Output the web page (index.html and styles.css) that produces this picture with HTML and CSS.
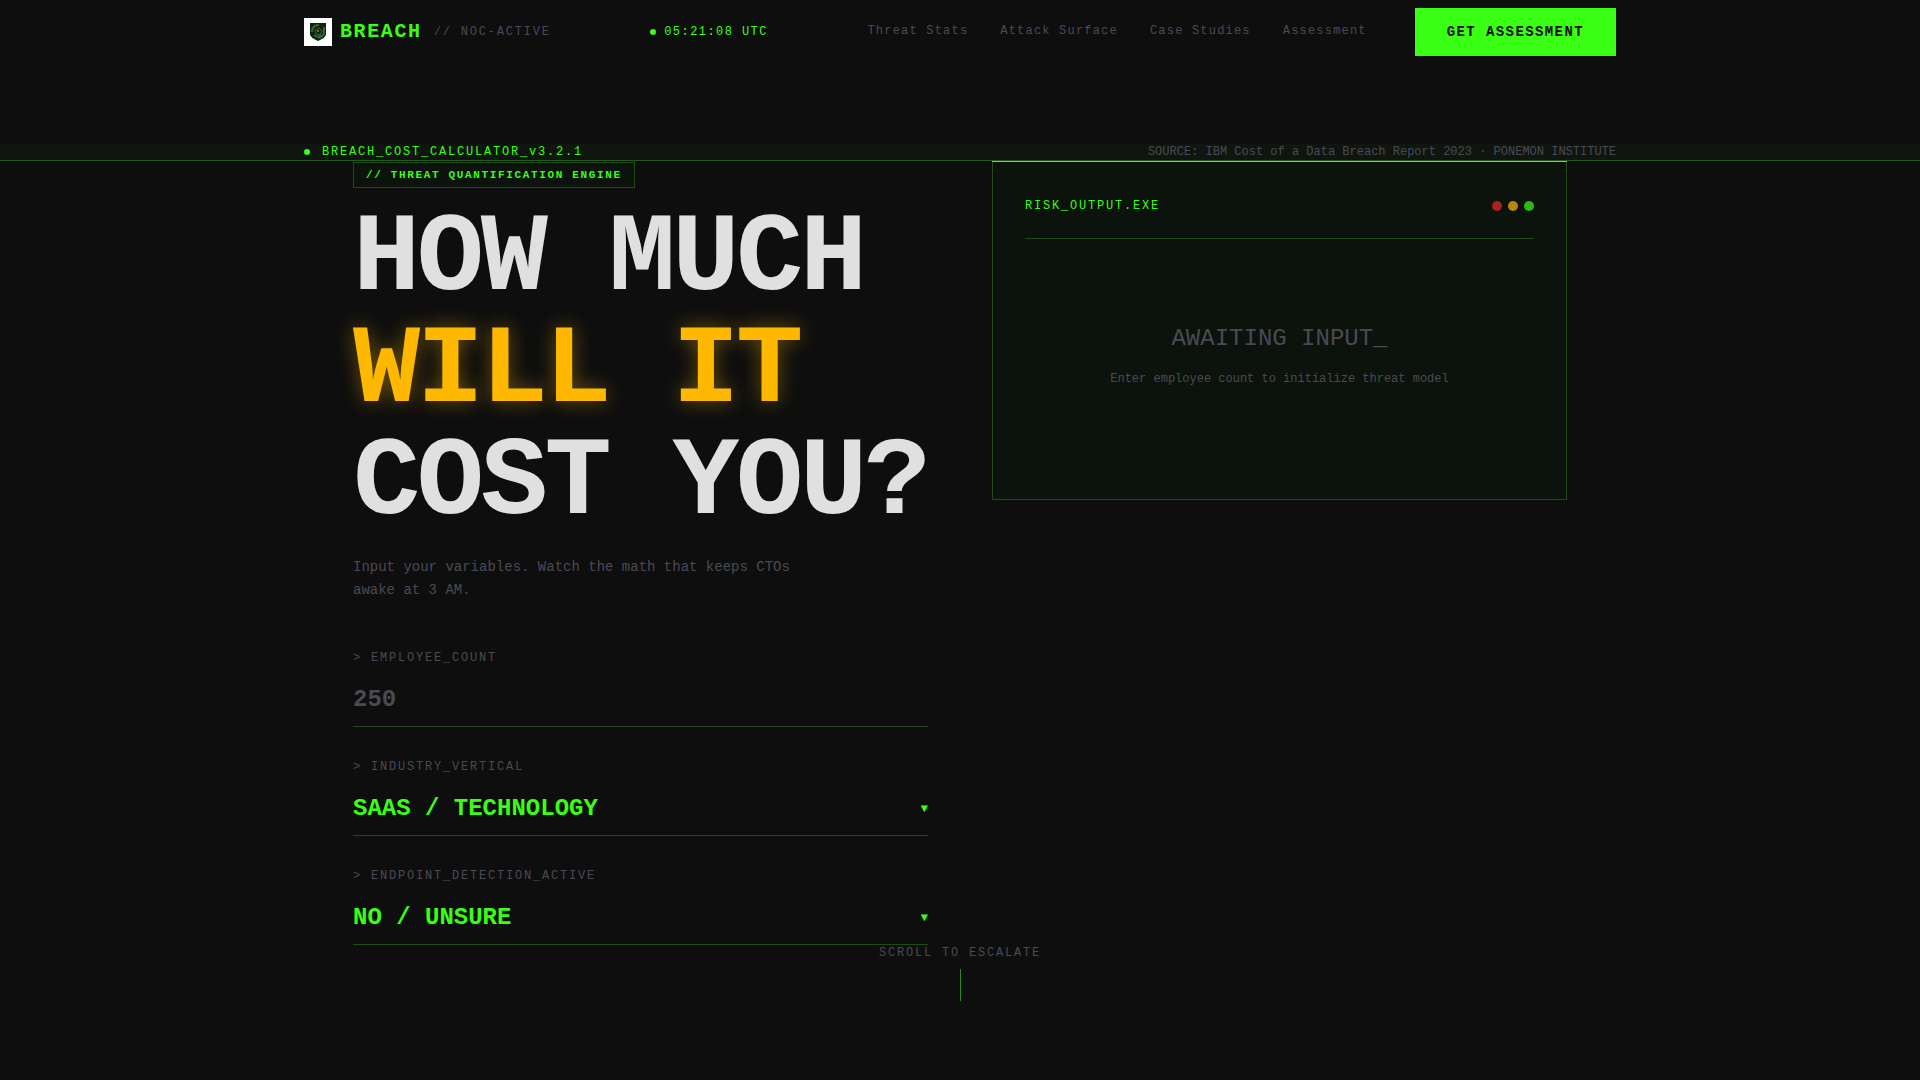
FILE: index.html
```html
<!DOCTYPE html>
<html lang="en">
<head>
    <meta charset="UTF-8">
    <meta name="viewport" content="width=device-width, initial-scale=1.0">
    <title>BREACH - Cost Calculator</title>
    <link rel="stylesheet" href="styles.css">
</head>
<body>
    <header class="navbar">
        <div class="container navbar-inner">
            <a class="brand" href="#">
                <svg class="brand-logo" viewBox="0 0 28 28" aria-hidden="true">
                    <rect width="28" height="28" fill="#fff"/>
                    <path d="M6 5h16v11c0 3-4 5-8 7-4-2-8-4-8-7z" fill="#10210f"/>
                    <path d="M8 14c0-5 3-7 7-7M20 9v6c0 3-3 4-6 5M10 17c2 2 5 2 7 0" fill="none" stroke="#2d6b35" stroke-width="2"/>
                    <path d="M11 12l4-2 3 3-2 4-4-1z" fill="none" stroke="#3d6a2c"/>
                    <circle cx="14" cy="13" r="1" fill="#d0742a"/>
                </svg>
                <span class="brand-name">BREACH</span>
                <span class="brand-status">// NOC-ACTIVE</span>
            </a>
            <div class="clock"><span class="dot"></span><span>05:21:08 UTC</span></div>
            <nav class="nav-right">
                <ul class="nav-links">
                    <li><a href="#stats">Threat Stats</a></li>
                    <li><a href="#surface">Attack Surface</a></li>
                    <li><a href="#cases">Case Studies</a></li>
                    <li><a href="#assessment">Assessment</a></li>
                </ul>
                <button class="btn" type="button">GET ASSESSMENT</button>
            </nav>
        </div>
    </header>

    <div class="statusbar">
        <div class="container statusbar-inner">
            <div class="status-name"><span class="dot"></span><span>BREACH_COST_CALCULATOR_v3.2.1</span></div>
            <div class="status-source">SOURCE: IBM Cost of a Data Breach Report 2023 · PONEMON INSTITUTE</div>
        </div>
    </div>

    <main class="container calculator">
        <section>
            <div class="tag">// THREAT QUANTIFICATION ENGINE</div>
            <h1>HOW MUCH<br><span class="amber">WILL IT</span><br>COST YOU?</h1>
            <p class="intro">Input your variables. Watch the math that keeps CTOs awake at 3 AM.</p>

            <form class="fields">
                <div class="field">
                    <label for="employees">&gt; EMPLOYEE_COUNT</label>
                    <input id="employees" type="text" inputmode="numeric" placeholder="250">
                </div>
                <div class="field">
                    <label for="industry">&gt; INDUSTRY_VERTICAL</label>
                    <div class="select-wrap">
                        <select id="industry">
                            <option>SAAS / TECHNOLOGY</option>
                        </select>
                        <span class="arrow">▼</span>
                    </div>
                </div>
                <div class="field">
                    <label for="edr">&gt; ENDPOINT_DETECTION_ACTIVE</label>
                    <div class="select-wrap">
                        <select id="edr">
                            <option>NO / UNSURE</option>
                        </select>
                        <span class="arrow">▼</span>
                    </div>
                </div>
            </form>
        </section>

        <section class="panel">
            <div class="panel-header">
                <span>RISK_OUTPUT.EXE</span>
                <div class="lights">
                    <span class="light red"></span>
                    <span class="light yellow"></span>
                    <span class="light green"></span>
                </div>
            </div>
            <div class="panel-empty">
                <div class="awaiting">AWAITING INPUT_</div>
                <div class="hint">Enter employee count to initialize threat model</div>
            </div>
        </section>
    </main>

    <div class="scroll-cue">
        <span>SCROLL TO ESCALATE</span>
        <div class="scroll-line"></div>
    </div>
</body>
</html>
```
FILE: styles.css
```css
:root {
    --bg: #0e0e0e;
    --green: #39ff14;
    --green-dim: #1d4d14;
    --amber: #ffb800;
    --muted: #4a4a55;
    --light: #e0e0e0;
}
* {
    box-sizing: border-box;
    margin: 0;
    padding: 0;
}
body {
    position: relative;
    min-height: 100vh;
    background: var(--bg);
    color: var(--light);
    font-family: "Liberation Mono", "Courier New", monospace;
    font-size: 12px;
    line-height: 16px;
}
a {
    color: inherit;
    text-decoration: none;
}
.container {
    width: 100%;
    max-width: 1376px;
    margin: 0 auto;
    padding: 0 32px;
}
.dot {
    width: 6px;
    height: 6px;
    border-radius: 50%;
    background: var(--green);
}

/* Top navigation */
.navbar-inner {
    display: flex;
    align-items: center;
    justify-content: space-between;
    height: 64px;
}
.brand {
    display: flex;
    align-items: center;
}
.brand-logo {
    width: 28px;
    height: 28px;
    margin-right: 8px;
}
.brand-name {
    margin-right: 12px;
    color: var(--green);
    font-size: 20px;
    font-weight: bold;
    letter-spacing: 0.08em;
}
.brand-status {
    color: var(--muted);
    letter-spacing: 0.15em;
}
.clock {
    display: flex;
    align-items: center;
    gap: 8px;
    color: var(--green);
    letter-spacing: 0.12em;
}
.nav-right {
    display: flex;
    align-items: center;
    gap: 48px;
}
.nav-links {
    display: flex;
    gap: 32px;
    padding-bottom: 2px;
    list-style: none;
    color: var(--muted);
    letter-spacing: 0.1em;
}
.btn {
    height: 48px;
    padding: 0 32px;
    border: none;
    background: var(--green);
    color: #0a0a0a;
    font-family: inherit;
    font-size: 14px;
    font-weight: bold;
    letter-spacing: 0.1em;
    cursor: pointer;
}

/* Status strip */
.statusbar {
    margin-top: 80px;
    border-bottom: 1px solid #245a1b;
    background: #10160f;
}
.statusbar-inner {
    display: flex;
    justify-content: space-between;
}
.status-name {
    display: flex;
    align-items: center;
    gap: 12px;
    color: var(--green);
    letter-spacing: 0.15em;
}
.status-source {
    color: var(--muted);
}

/* Calculator */
.calculator {
    display: grid;
    grid-template-columns: 1fr 1fr;
    gap: 64px;
    align-items: start;
    max-width: 1278px;
}
.tag {
    width: fit-content;
    margin: 1px 0 16px;
    padding: 4px 12px;
    border: 1px solid var(--green-dim);
    background: #0c130c;
    color: var(--green);
    font-size: 11px;
    font-weight: bold;
    letter-spacing: 0.15em;
}
h1 {
    font-size: 112px;
    font-weight: bold;
    line-height: 1;
    letter-spacing: -0.03em;
    white-space: nowrap;
}
.amber {
    color: var(--amber);
    text-shadow: 0 0 20px rgba(255, 184, 0, 0.4);
}
.intro {
    max-width: 480px;
    margin: 16px 0 48px;
    color: var(--muted);
    font-size: 14px;
    line-height: 23px;
}
.fields {
    display: flex;
    flex-direction: column;
    gap: 32px;
}
.field label {
    display: block;
    margin-bottom: 8px;
    color: var(--muted);
    letter-spacing: 0.15em;
}
.field input,
.field select {
    display: block;
    width: 100%;
    height: 53px;
    padding-bottom: 2px;
    border: none;
    border-bottom: 1px solid var(--green-dim);
    border-radius: 0;
    outline: none;
    background: transparent;
    color: var(--green);
    font-family: inherit;
    font-size: 24px;
    font-weight: bold;
    appearance: none;
}
.field input::placeholder {
    color: var(--muted);
    opacity: 1;
}
.select-wrap {
    position: relative;
}
.arrow {
    position: absolute;
    top: 18px;
    right: 0;
    color: var(--green);
    pointer-events: none;
}

/* Risk output */
.panel {
    position: relative;
    padding: 32px;
    border: 1px solid var(--green-dim);
    background: #0c120c;
}
.panel::before {
    content: "";
    position: absolute;
    top: -1px;
    left: -1px;
    right: -1px;
    height: 1px;
    background: var(--green);
}
.panel-header {
    display: flex;
    align-items: center;
    justify-content: space-between;
    padding-bottom: 20px;
    border-bottom: 1px solid var(--green-dim);
    color: var(--green);
    line-height: 24px;
    letter-spacing: 0.15em;
}
.lights {
    display: flex;
    gap: 6px;
}
.light {
    width: 10px;
    height: 10px;
    border-radius: 50%;
}
.red {
    background: #a82222;
}
.yellow {
    background: #b8860b;
}
.green {
    background: #2bb914;
}
.panel-empty {
    padding: 84px 0 80px;
    color: var(--muted);
    text-align: center;
}
.awaiting {
    margin-bottom: 16px;
    font-size: 24px;
    line-height: 32px;
}

/* Scroll cue sits over the bottom of the calculator */
.scroll-cue {
    position: absolute;
    right: 0;
    bottom: 79px;
    left: 0;
    display: flex;
    flex-direction: column;
    align-items: center;
    gap: 8px;
    color: var(--muted);
    letter-spacing: 0.15em;
    pointer-events: none;
}
.scroll-line {
    width: 1px;
    height: 32px;
    background: #2b8a1a;
}
```
